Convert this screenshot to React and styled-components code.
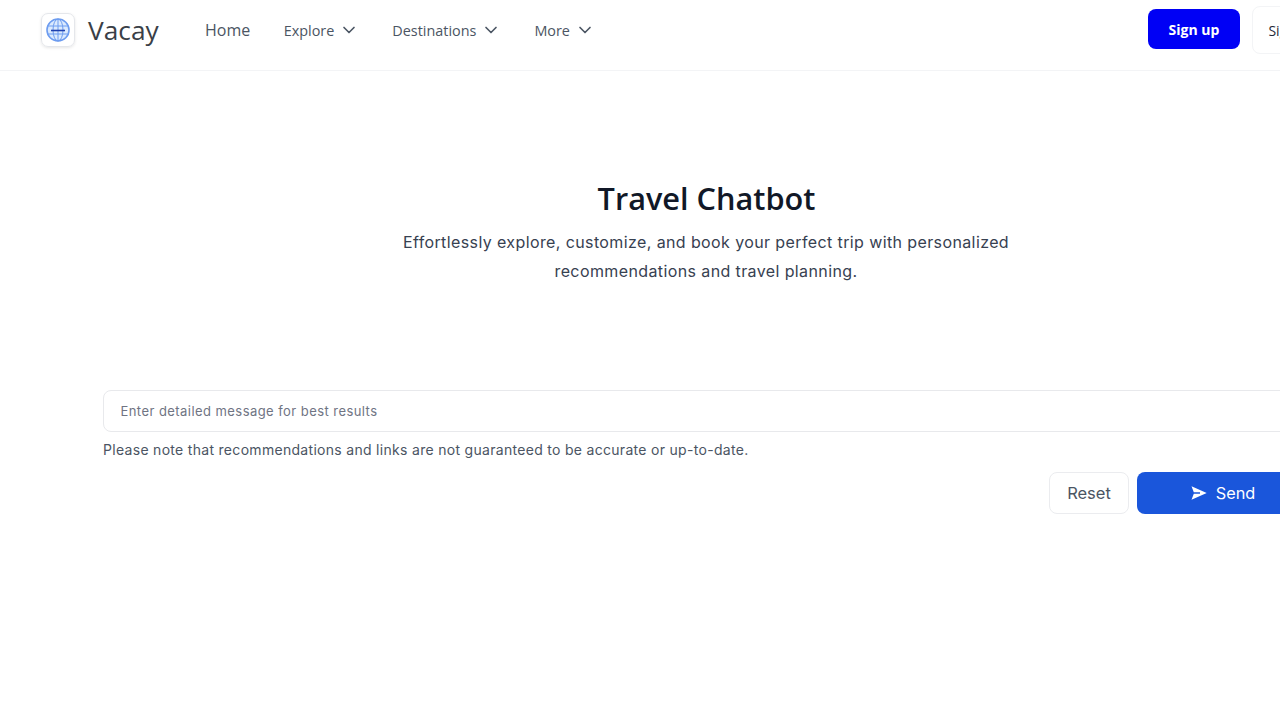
import styled, { createGlobalStyle } from 'styled-components'
import { ChevronDown } from 'lucide-react'

const GlobalStyle = createGlobalStyle`
html, body {
    margin: 0;
    padding: 0;
    overflow: hidden;
    background: #fff;
}
* { box-sizing: border-box; }
`

const Page = styled.div`
width: 1412px;
height: 720px;
background: #fff;
font-family: Inter, "Liberation Sans", sans-serif;
`

const Nav = styled.nav`
height: 71px;
padding: 0 80px 10px 41px;
display: flex;
align-items: center;
border-bottom: 1px solid #f3f4f6;
`

const LogoTile = styled.div`
width: 34px;
height: 34px;
border-radius: 7px;
border: 1px solid #e5e7eb;
box-shadow: 0 1px 3px rgba(0, 0, 0, 0.1);
display: flex;
align-items: center;
justify-content: center;
`

const Brand = styled.span`
margin-left: 13px;
width: 117px;
font-family: "Open Sans", sans-serif;
font-size: 26.3px;
color: #3a3f47;
`

const HomeLink = styled.a`
font-family: "Open Sans", sans-serif;
font-size: 16px;
font-weight: 500;
color: #4b5563;
margin-right: 33.5px;
`

const NavItem = styled.a`
display: flex;
align-items: center;
gap: 5px;
margin-right: 33px;
font-family: "Open Sans", sans-serif;
font-size: 14.4px;
font-weight: 500;
color: #4b5563;
`

const NavActions = styled.div`
margin-left: auto;
display: flex;
align-items: center;
gap: 12px;
`

const SignUp = styled.button`
width: 92px;
height: 40px;
margin-bottom: 2px;
border: 0;
border-radius: 8px;
background: #0000f5;
color: #fff;
font-family: "Open Sans", sans-serif;
font-size: 14px;
font-weight: 700;
`

const SignIn = styled.button`
width: 76px;
height: 48px;
margin-right: 4px;
border: 1px solid #f3f4f6;
border-radius: 8px;
background: #fff;
color: #1f2937;
font-family: "Open Sans", sans-serif;
font-size: 14px;
font-weight: 500;
`

const Hero = styled.section`
padding-top: 105px;
display: flex;
flex-direction: column;
align-items: center;
`

const Title = styled.h1`
margin: 0 0 0 1px;
font-family: "Open Sans", sans-serif;
font-size: 30.7px;
line-height: 44px;
font-weight: 600;
color: #111827;
`

const Subtitle = styled.p`
margin: 8px 0 0;
width: 640px;
text-align: center;
font-size: 16px;
line-height: 29px;
font-weight: 400;
letter-spacing: 0.39px;
color: #374151;
`

const Form = styled.form`
margin: 104px 103px 0;
`

const Input = styled.input`
display: block;
width: 100%;
height: 42px;
padding: 0 16.5px;
border: 1px solid #e8e9ec;
border-radius: 8px;
font-family: inherit;
font-size: 13px;
outline: none;
letter-spacing: 0.44px;

&::placeholder {
    color: #6f7483;
    opacity: 1;
}
`

const Note = styled.p`
margin: 9px 0 0;
font-size: 14px;
line-height: 18px;
letter-spacing: 0.3px;
color: #4b5563;
`

const Actions = styled.div`
margin-top: 13px;
display: flex;
justify-content: flex-end;
gap: 8px;
`

const ResetButton = styled.button`
width: 80px;
height: 42px;
border: 1px solid #ebecef;
border-radius: 8px;
background: #fff;
color: #4b5563;
font-family: inherit;
font-size: 16.5px;
`

const SendButton = styled.button`
width: 172px;
height: 42px;
border: 0;
border-radius: 8px;
background: #1a56db;
color: #fff;
display: flex;
align-items: center;
justify-content: center;
gap: 9px;
font-family: inherit;
font-size: 16.3px;
`

const GlobeLogo = () => (
  <svg width="26" height="26" viewBox="0 0 26 26" fill="none">
    <circle cx="13" cy="13" r="11" fill="#dbeafe" stroke="#6d9cf0" strokeWidth="1.6" />
    <ellipse cx="13" cy="13" rx="5" ry="11" stroke="#6d9cf0" strokeWidth="1" />
    <path d="M2.5 9h21M2.5 17h21M13 2v22" stroke="#6d9cf0" strokeWidth="1" />
    <path d="M6 13.5h14" stroke="#1e40af" strokeWidth="1.6" />
  </svg>
)

const SendIcon = () => (
  <svg width="16" height="14" viewBox="0 0 16 14" fill="#fff">
    <path d="M0.5 0.3 L15.7 7 L0.5 13.7 L2.8 7.8 H9 V6.2 H2.8 Z" />
  </svg>
)

const App = () => {
  return (
    <Page>
      <GlobalStyle />
      <Nav>
        <LogoTile>
          <GlobeLogo />
        </LogoTile>
        <Brand>Vacay</Brand>
        <HomeLink>Home</HomeLink>
        {['Explore', 'Destinations', 'More'].map((label) => (
          <NavItem key={label}>
            {label}
            <ChevronDown size={20} strokeWidth={2} />
          </NavItem>
        ))}
        <NavActions>
          <SignUp>Sign up</SignUp>
          <SignIn>Sign in</SignIn>
        </NavActions>
      </Nav>
      <Hero>
        <Title>Travel Chatbot</Title>
        <Subtitle>
          Effortlessly explore, customize, and book your perfect trip with personalized
          recommendations and travel planning.
        </Subtitle>
      </Hero>
      <Form>
        <Input placeholder="Enter detailed message for best results" />
        <Note>Please note that recommendations and links are not guaranteed to be accurate or up-to-date.</Note>
        <Actions>
          <ResetButton type="button">Reset</ResetButton>
          <SendButton type="button">
            <SendIcon />
            Send
          </SendButton>
        </Actions>
      </Form>
    </Page>
  )
}

export default App
